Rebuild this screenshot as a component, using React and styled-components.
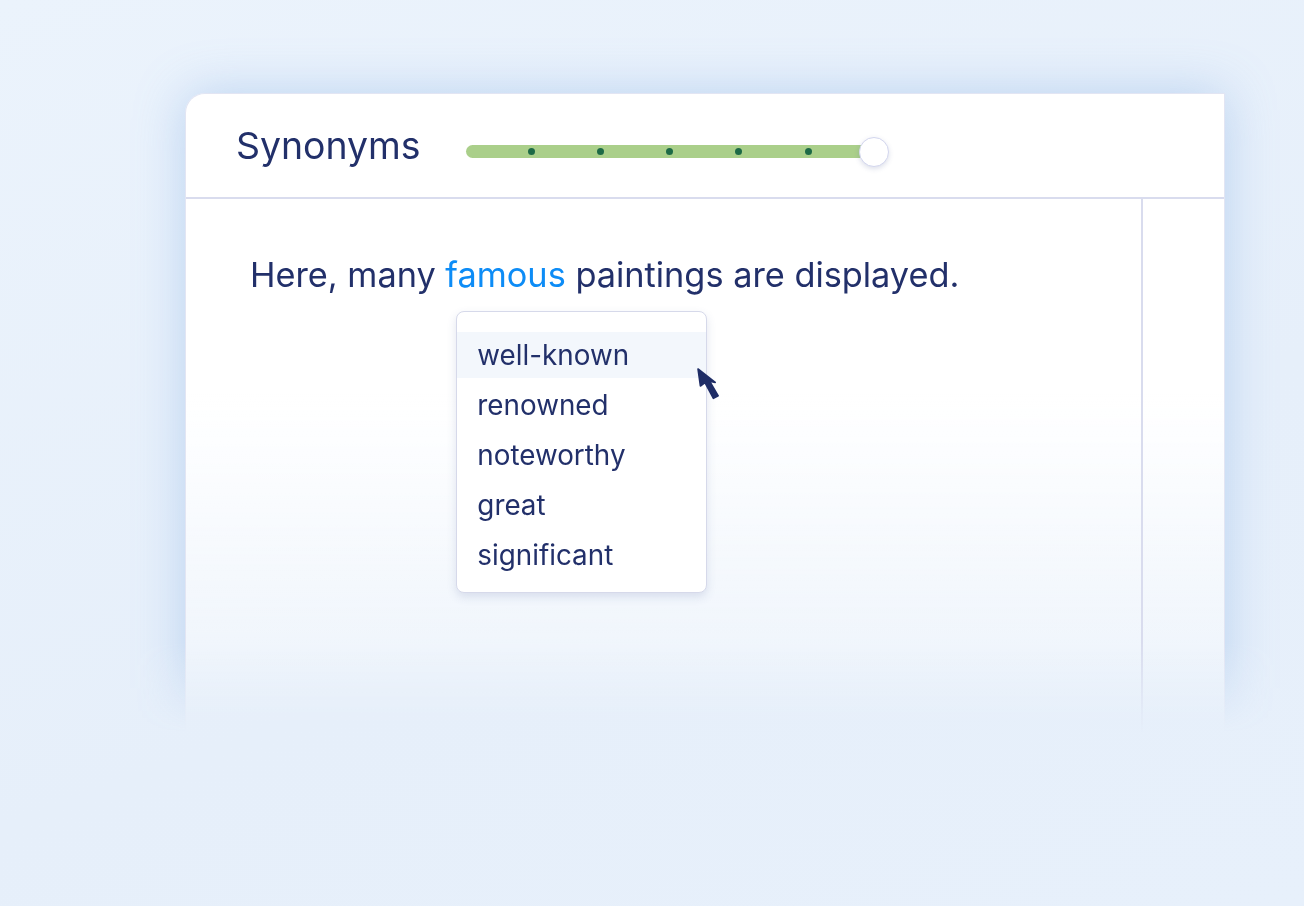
import React from "react";
import styled, { createGlobalStyle } from "styled-components";

const GlobalStyle = createGlobalStyle`
  body {
    margin: 0;
    background: linear-gradient(160deg, #ebf3fc 0%, #e6effa 60%, #e7f0fb 100%);
    font-family: Inter, "Noto Sans", sans-serif;
    color: #22306a;
  }
`;

const Page = styled.div`
  min-height: 906px;
  padding: 13px 0 0 105px;
  box-sizing: border-box;
  overflow: hidden;
`;

// holds the window plus room for its glow, and fades both out at the bottom
const Frame = styled.div`
  width: 1200px;
  padding: 80px;
  box-sizing: border-box;
  -webkit-mask-image: linear-gradient(180deg, #000 0, #000 630px, transparent 720px);
  mask-image: linear-gradient(180deg, #000 0, #000 630px, transparent 720px);
`;

const Window = styled.div`
  width: 1040px;
  height: 640px;
  box-sizing: border-box;
  border: 1px solid #e2e5f3;
  border-bottom: none;
  border-radius: 20px 0 0 0;
  background: linear-gradient(180deg, #ffffff 0, #ffffff 300px, rgba(255, 255, 255, 0.25) 620px);
  box-shadow: 0 0 50px rgba(110, 160, 225, 0.38);
  display: flex;
  flex-direction: column;
`;

const Header = styled.div`
  height: 105px;
  flex-shrink: 0;
  box-sizing: border-box;
  border-bottom: 2px solid #d9dcee;
  display: flex;
  align-items: center;
  padding: 0 0 0 50px;
  gap: 45px;
`;

const Title = styled.h1`
  margin: 0;
  font-size: 37.4px;
  font-weight: 400;
  color: #22306a;
`;

const Slider = styled.div`
  position: relative;
  width: 424px;
  height: 13px;
  margin-top: 12px;
`;

const Track = styled.div`
  width: 409px;
  height: 13px;
  border-radius: 7px;
  background: #aacf8a;
  display: flex;
  align-items: center;
  justify-content: space-between;
  padding: 0 63px 0 62px;
  box-sizing: border-box;
`;

const Dot = styled.span`
  width: 7px;
  height: 7px;
  border-radius: 50%;
  background: #1d6a46;
`;

const Thumb = styled.div`
  position: absolute;
  left: 393px;
  top: 50%;
  width: 30px;
  height: 30px;
  box-sizing: border-box;
  transform: translateY(-50%);
  border-radius: 50%;
  background: #fff;
  border: 1.5px solid #d3d6ee;
  box-shadow: 0 2px 5px rgba(60, 80, 140, 0.18);
`;

const Body = styled.div`
  flex: 1;
  display: flex;
`;

const Editor = styled.div`
  width: 955px;
  padding: 56px 0 0 64px;
  box-sizing: border-box;
`;

const Divider = styled.div`
  width: 2px;
  background: #d9dcee;
`;

const Sentence = styled.p`
  margin: 0;
  font-size: 34.3px;
  line-height: 40px;
  color: #22306a;
`;

const Word = styled.span`
  position: relative;
  color: #0d8cf6;
`;

const Dropdown = styled.ul`
  position: absolute;
  left: 11px;
  top: 57px;
  width: 251px;
  margin: 0;
  padding: 20px 0 14px;
  box-sizing: border-box;
  list-style: none;
  background: #fff;
  border: 1px solid #d6d9ea;
  border-radius: 8px;
  box-shadow: 0 4px 10px rgba(70, 90, 150, 0.16);
  display: flex;
  flex-direction: column;
  gap: 4px;
`;

const Option = styled.li`
  height: 46px;
  display: flex;
  align-items: center;
  padding-left: 20px;
  font-size: 27.8px;
  color: #22306a;
  background: ${(p) => (p.$active ? "#f3f7fc" : "transparent")};
`;

const Cursor = styled.svg`
  position: absolute;
  left: 240px;
  top: 56px;
  width: 23px;
  height: 32px;
`;

const options = ["well-known", "renowned", "noteworthy", "great", "significant"];

export default function App() {
  return (
    <>
      <GlobalStyle />
      <Page>
        <Frame>
          <Window>
            <Header>
              <Title>Synonyms</Title>
              <Slider>
                <Track>
                  {[0, 1, 2, 3, 4].map((i) => (
                    <Dot key={i} />
                  ))}
                </Track>
                <Thumb />
              </Slider>
            </Header>
            <Body>
              <Editor>
                <Sentence>
                  Here, many{" "}
                  <Word>
                    famous
                    <Dropdown>
                      {options.map((o, i) => (
                        <Option key={o} $active={i === 0}>
                          {o}
                        </Option>
                      ))}
                      <Cursor viewBox="-1 -1 23 32">
                        <path
                          d="M0 0 L2.4 17 L7 13.6 L15.4 29.4 L20.2 26.8 L11.6 12.2 L17.2 13.4 Z"
                          fill="#1f2d66"
                          stroke="#1f2d66"
                          strokeWidth="1.6"
                          strokeLinejoin="round"
                        />
                      </Cursor>
                    </Dropdown>
                  </Word>{" "}
                  paintings are displayed.
                </Sentence>
              </Editor>
              <Divider />
            </Body>
          </Window>
        </Frame>
      </Page>
    </>
  );
}
